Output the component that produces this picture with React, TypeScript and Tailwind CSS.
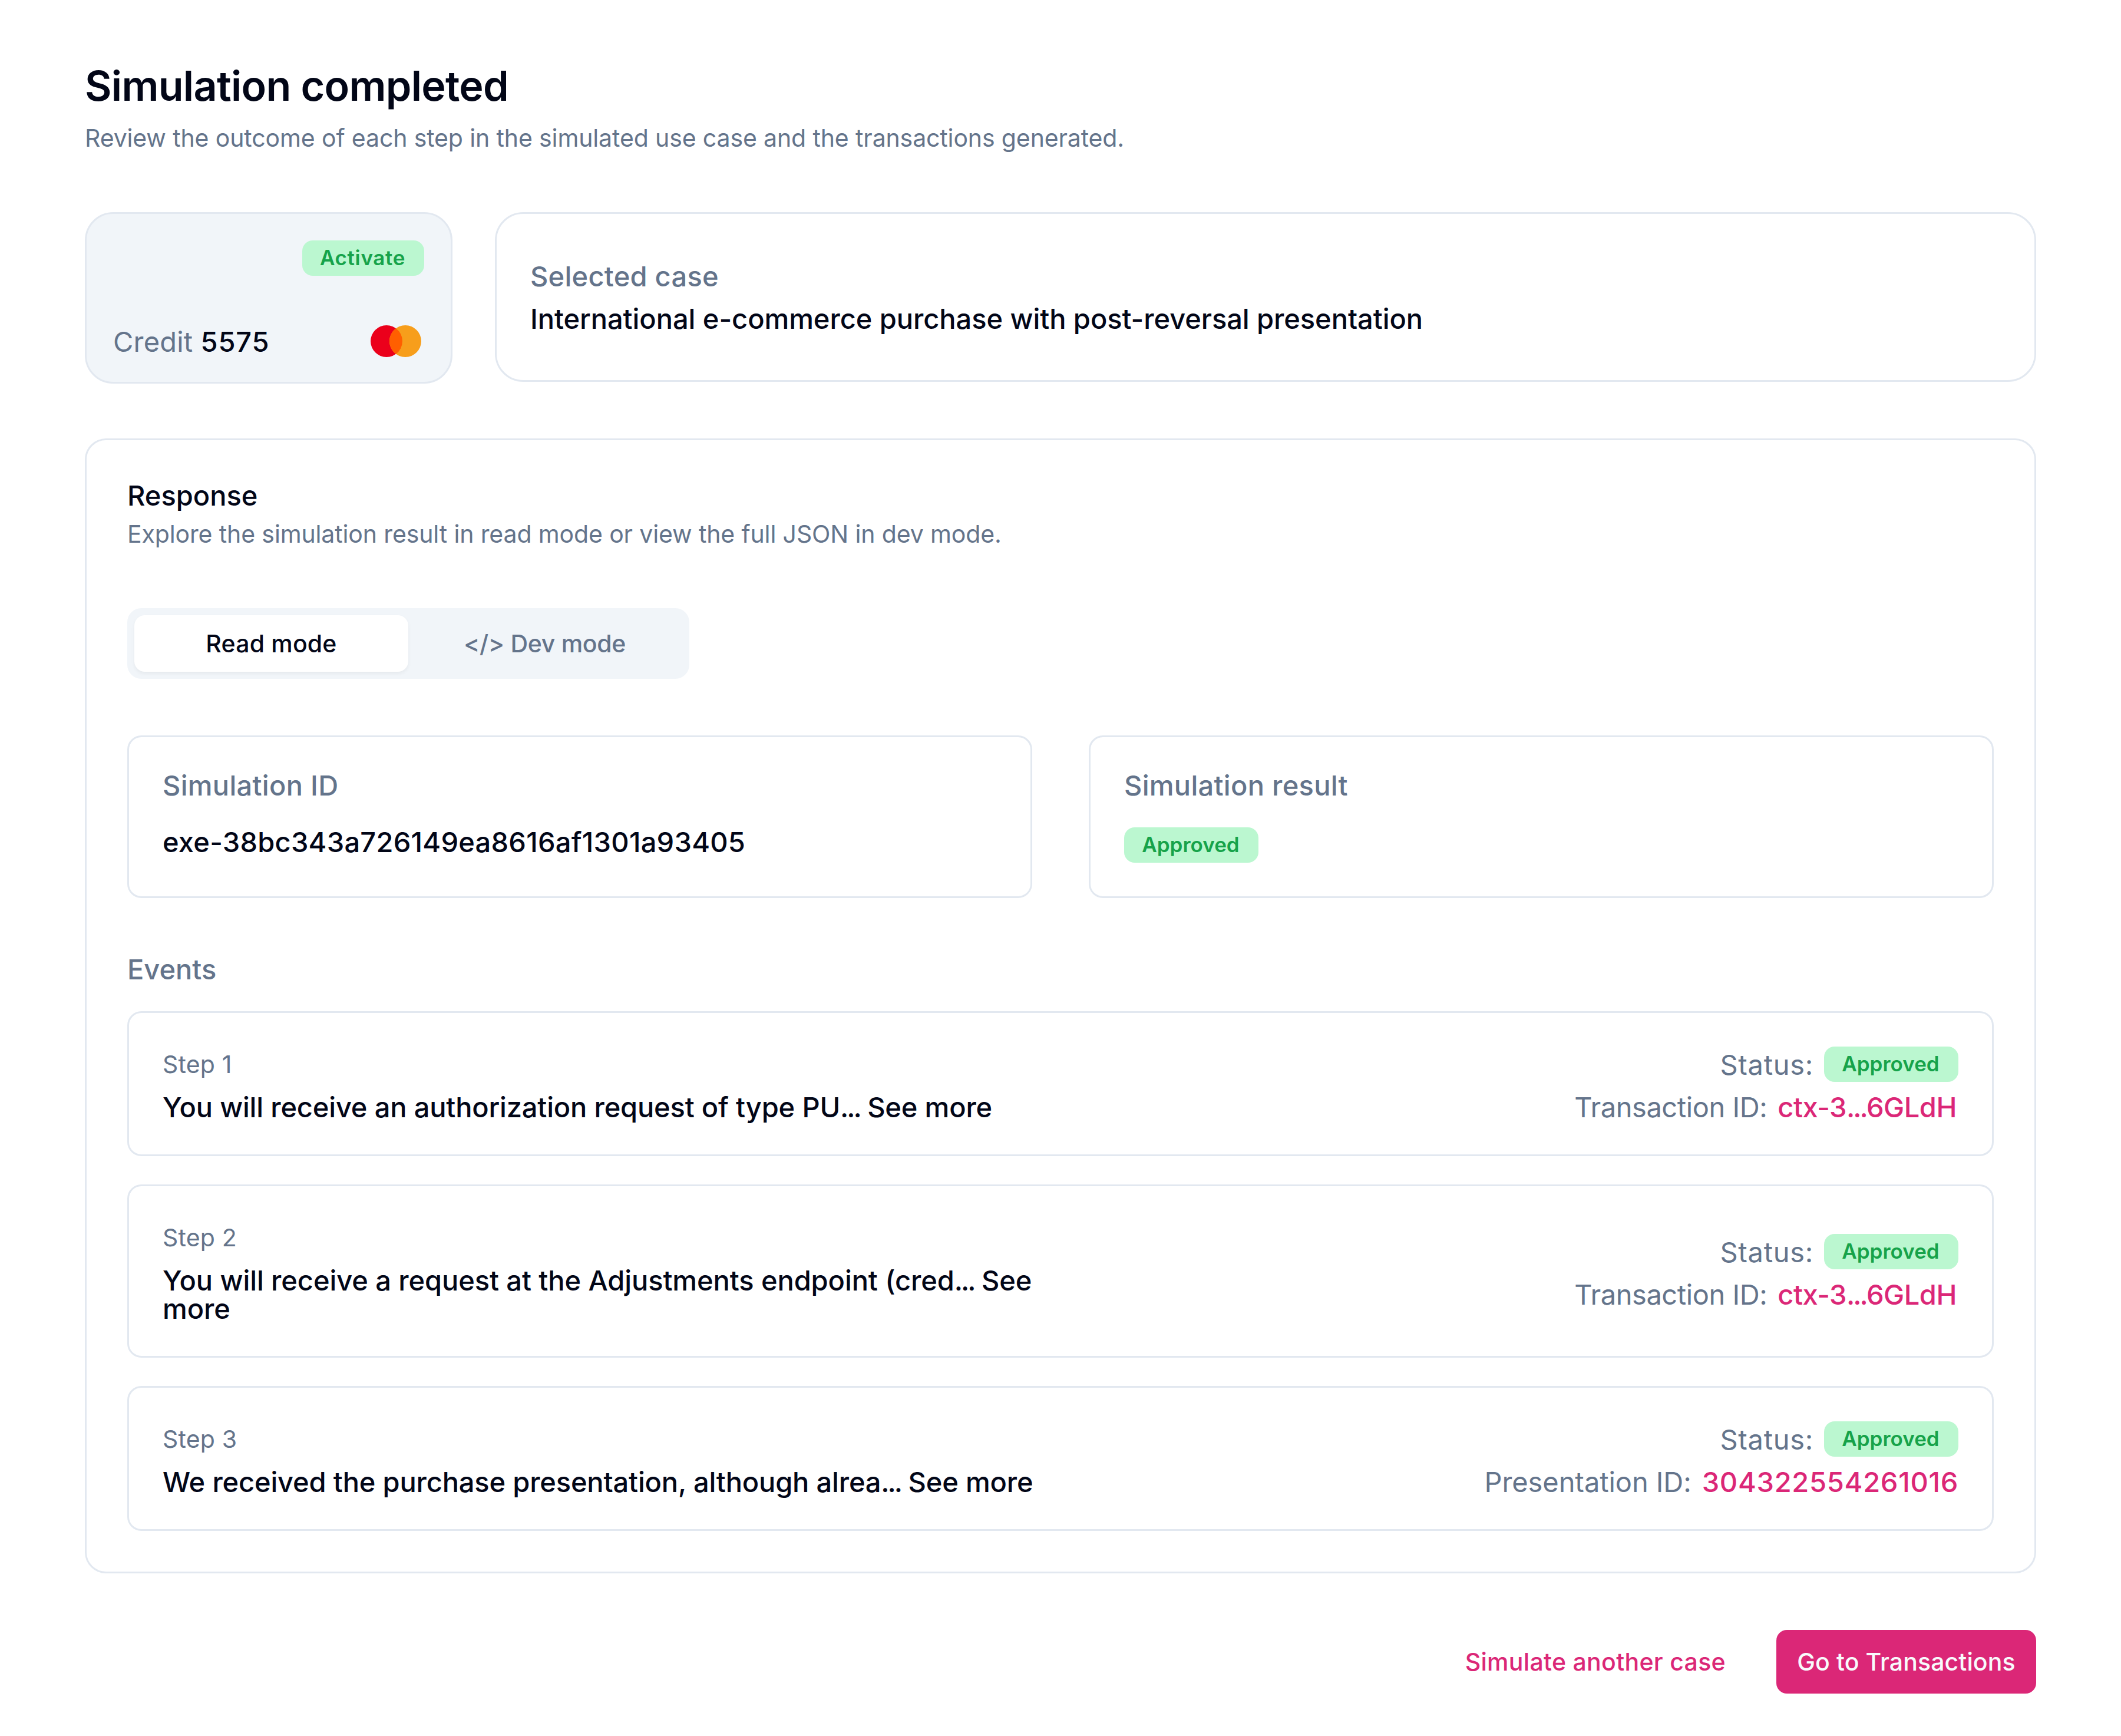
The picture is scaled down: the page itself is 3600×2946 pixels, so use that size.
import { clsx } from "clsx";

type Step = {
  title: string;
  text: string;
  idLabel: string;
  id: React.ReactNode;
  textClass: string;
  labelClass: string;
  idClass: string;
};

const steps: Step[] = [
  {
    title: "Step 1",
    text: "You will receive an authorization request of type PU",
    idLabel: "Transaction ID:",
    id: <>ctx-3<Dots />6GLdH</>,
    textClass: "tracking-[-0.17px]",
    labelClass: "tracking-[-0.43px]",
    idClass: "tracking-[-0.45px] pr-[3px]",
  },
  {
    title: "Step 2",
    text: "You will receive a request at the Adjustments endpoint (cred",
    idLabel: "Transaction ID:",
    id: <>ctx-3<Dots />6GLdH</>,
    textClass: "tracking-[-0.08px]",
    labelClass: "tracking-[-0.43px]",
    idClass: "tracking-[-0.45px] pr-[3px]",
  },
  {
    title: "Step 3",
    text: "We received the purchase presentation, although alrea",
    idLabel: "Presentation ID:",
    id: "304322554261016",
    textClass: "tracking-[-0.16px]",
    labelClass: "tracking-[-0.07px]",
    idClass: "tracking-[0.72px]",
  },
];

export default function App() {
  return (
    <main className="min-h-[2946px] bg-white px-36 pt-24 pb-18 font-['Inter',sans-serif] text-[#020617]">
      <header>
        <h1 className="text-[70px] leading-[99px] font-semibold tracking-[-0.72px]">
          Simulation completed
        </h1>
        <p className="mt-[9px] text-[41px] leading-[60px] tracking-[-0.13px] text-[#64748b]">
          Review the outcome of each step in the simulated use case and the
          transactions generated.
        </p>
      </header>

      <section className="mt-24 flex items-start gap-18">
        <div className="flex h-[291px] w-[624px] flex-col justify-between rounded-[48px] border-3 border-[#e2e8f0] bg-[#f1f5f9] px-[45px] pt-[45px] pb-[42px]">
          <Badge className="w-[207px] self-end tracking-[0.65px]">
            Activate
          </Badge>
          <div className="flex items-center justify-between">
            <p className="pt-px text-[47px] leading-[49px] text-[#64748b]">
              <span className="tracking-[0.2px]">Credit</span>{" "}
              <span className="font-medium tracking-[0.8px] text-[#020617]">
                5575
              </span>
            </p>
            <MastercardLogo />
          </div>
        </div>
        <div className="flex h-[288px] flex-1 flex-col gap-[23px] rounded-[48px] border-3 border-[#e2e8f0] px-[57px] pt-[81px] text-[47px] leading-[49px] font-medium">
          <p className="tracking-[0.26px] text-[#64748b]">Selected case</p>
          <p className="tracking-[-0.05px]">
            International e-commerce purchase with post-reversal presentation
          </p>
        </div>
      </section>

      <section className="mt-[93px] rounded-[36px] border-3 border-[#e2e8f0] p-[69px]">
        <h2 className="text-[47px] leading-[49px] font-medium">Response</h2>
        <p className="mt-[11px] text-[41px] leading-[60px] tracking-[-0.13px] text-[#64748b]">
          Explore the simulation result in read mode or view the full JSON in
          dev mode.
        </p>

        <div className="mt-24 grid h-[120px] w-[954px] grid-cols-2 rounded-[24px] bg-[#f1f5f9] p-3 text-[41px] leading-[60px] font-medium">
          <button className="rounded-[18px] bg-white tracking-[0.18px] shadow-[0_3px_6px_rgba(0,0,0,0.05)]">
            Read mode
          </button>
          <button className="pr-[2px] tracking-[-0.3px] text-[#64748b]">
            {"</> Dev mode"}
          </button>
        </div>

        <div className="mt-24 grid grid-cols-2 gap-24">
          <InfoCard label="Simulation ID">
            <p className="text-[47px] leading-[49px] font-medium tracking-[0.25px]">
              exe-38bc343a726149ea8616af1301a93405
            </p>
          </InfoCard>
          <InfoCard label="Simulation result">
            <Badge className="w-[228px]">Approved</Badge>
          </InfoCard>
        </div>

        <h3 className="mt-24 text-[47px] leading-[49px] font-medium text-[#64748b]">
          Events
        </h3>
        <div className="mt-[47px] flex flex-col gap-12">
          {steps.map((step) => (
            <StepCard key={step.title} step={step} />
          ))}
        </div>
      </section>

      <footer className="mt-24 flex justify-end gap-[50px] text-[41px] leading-[60px] font-medium">
        <button className="h-[108px] px-9 tracking-[0.31px] text-[#db2777]">
          Simulate another case
        </button>
        <button className="h-[108px] w-[441px] rounded-[18px] bg-[#db2777] tracking-[0.1px] text-[#f8fafc]">
          Go to Transactions
        </button>
      </footer>
    </main>
  );
}

function StepCard({ step }: { step: Step }) {
  return (
    <div className="flex items-center justify-between rounded-[24px] border-3 border-[#e2e8f0] p-[57px]">
      <div className="w-1/2">
        <p className="text-[41px] leading-[60px] tracking-[0.2px] text-[#64748b]">
          {step.title}
        </p>
        <p
          className={clsx(
            "mt-[19px] -mb-px text-[47px] leading-[48px] font-medium",
            step.textClass,
          )}
        >
          {step.text}
          <Dots /> See more
        </p>
      </div>
      <div className="flex flex-col items-end gap-[17px] text-[47px]">
        <div className="flex h-[60px] gap-[18px] leading-[61px]">
          <span className="tracking-[0.7px] text-[#64748b]">Status:</span>
          <Badge className="w-[228px]">Approved</Badge>
        </div>
        <div className="-mb-px flex gap-[18px] pt-px leading-[49px]">
          <span className={clsx("text-[#64748b]", step.labelClass)}>
            {step.idLabel}
          </span>
          <a className={clsx("font-medium text-[#db2777]", step.idClass)}>
            {step.id}
          </a>
        </div>
      </div>
    </div>
  );
}

function InfoCard({
  label,
  children,
}: {
  label: string;
  children: React.ReactNode;
}) {
  return (
    <div className="h-[276px] rounded-[24px] border-3 border-[#e2e8f0] p-[57px]">
      <p className="mb-[47px] text-[47px] leading-[49px] font-medium tracking-[0.3px] text-[#64748b]">
        {label}
      </p>
      {children}
    </div>
  );
}

function Badge({
  className,
  children,
}: {
  className?: string;
  children: string;
}) {
  return (
    <div
      className={clsx(
        "h-[60px] rounded-[18px] bg-[#bbf7d0] pr-[2px] text-center text-[35px] leading-[58px] font-semibold text-[#16a34a]",
        className,
      )}
    >
      {children}
    </div>
  );
}

// tighter than the default period spacing
function Dots() {
  return <span className="tracking-[-3px]">...</span>;
}

function MastercardLogo() {
  return (
    <svg
      width="86"
      height="54"
      viewBox="0 0 86 54"
      className="mr-[5px]"
      aria-label="Mastercard"
    >
      <circle cx="27" cy="27" r="27" fill="#eb001b" />
      <circle cx="59" cy="27" r="27" fill="#f79e1b" />
      <path d="M43 5.25a27 27 0 0 1 0 43.5a27 27 0 0 1 0-43.5z" fill="#ff5f00" />
    </svg>
  );
}
